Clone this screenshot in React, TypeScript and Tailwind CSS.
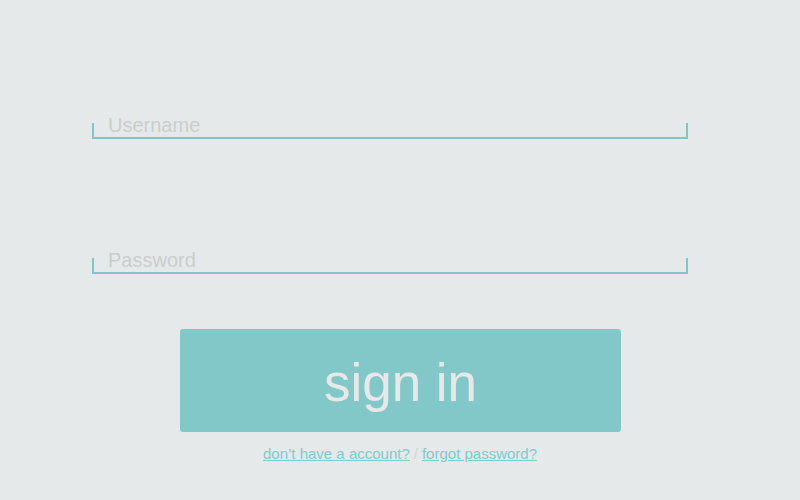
export default function App() {
  const fields = ["Username", "Password"];

  return (
    <div className="w-[800px] h-[500px] bg-[#e5e9e9] flex flex-col items-start font-['Liberation_Sans',Arial,sans-serif] pt-[113px]">
      {fields.map((label, i) => (
        <div
          key={label}
          className={`relative ml-[92px] w-[596px] ${i === 1 ? "mt-[109px]" : ""}`}
        >
          <input
            type={label === "Password" ? "password" : "text"}
            placeholder={label}
            className="block w-full h-[26px] border-b-2 border-[#7fc6c6] bg-transparent pl-[16px] pb-[1px] text-[20px] text-[#999] placeholder:text-[#cbcdcd] outline-none"
          />
          <span className="absolute left-0 bottom-0 w-[2px] h-[16px] bg-[#7fc6c6]" />
          <span className="absolute right-0 bottom-0 w-[2px] h-[16px] bg-[#7fc6c6]" />
        </div>
      ))}

      <button className="mt-[55px] ml-[180px] w-[441px] h-[103px] rounded-[3px] bg-[#82c8c8] text-[#e8e8e8] text-[53px] leading-none pt-[4px]">
        sign in
      </button>

      <div className="w-full mt-[13px] flex justify-center text-[15px] leading-[18px]">
        <div className="flex gap-[4px]">
          <a href="#" className="text-[#7fc9c9] underline">
            don’t have a account?
          </a>
          <span className="text-[#d2d5d5]">/</span>
          <a href="#" className="text-[#7fc9c9] underline">
            forgot password?
          </a>
        </div>
      </div>
    </div>
  );
}
